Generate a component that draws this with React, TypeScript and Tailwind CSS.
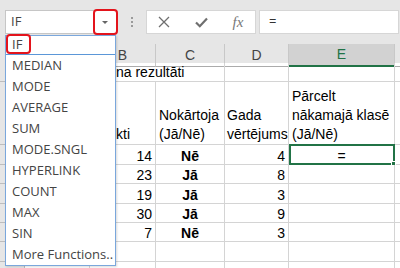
import React from "react";

type Row = { b: string; c: string; d: string; h: string };

const rows: Row[] = [
  { b: "14", c: "Nē", d: "4", h: "h-[20px]" },
  { b: "23", c: "Jā", d: "8", h: "h-[19px]" },
  { b: "19", c: "Jā", d: "3", h: "h-[20px]" },
  { b: "30", c: "Jā", d: "9", h: "h-[19px]" },
  { b: "7", c: "Nē", d: "3", h: "h-[19px]" },
];

const functions = [
  "MEDIAN",
  "MODE",
  "AVERAGE",
  "SUM",
  "MODE.SNGL",
  "HYPERLINK",
  "COUNT",
  "MAX",
  "SIN",
  "More Functions..",
];

const cell = "border-r border-b border-[#d4d4d4]";
const rowHead = "border-r border-b border-[#bdbdbd] bg-[#e6e6e6]";

function Toolbar() {
  return (
    <div className="flex h-[44px] items-start bg-[#e6e6e6] pt-[10px]">
      {/* Name box */}
      <div className="ml-[5px] flex h-[24px] w-[112px] items-center justify-between border border-[#c6c6c6] bg-white pl-[5px] pr-[8px] font-['Open_Sans'] text-[13px] text-[#444]">
        <span>IF</span>
        <span className="mt-[1px] h-0 w-0 border-x-[3px] border-t-[3px] border-x-transparent border-t-[#666]" />
      </div>

      {/* Grip */}
      <div className="flex h-[24px] w-[29px] flex-col items-center justify-center gap-[2px]">
        <span className="h-[2px] w-[2px] bg-[#9a9a9a]" />
        <span className="h-[2px] w-[2px] bg-[#9a9a9a]" />
        <span className="h-[2px] w-[2px] bg-[#9a9a9a]" />
      </div>

      {/* Cancel / enter / fx */}
      <div className="flex h-[24px] w-[110px] items-center border border-[#d6d6d6] bg-white text-[#6f6f6f]">
        <div className="flex w-[34px] justify-center">
          <svg width="12" height="12" viewBox="0 0 12 12" fill="none" stroke="currentColor" strokeWidth="1.3">
            <path d="M1 1 L11 11 M11 1 L1 11" />
          </svg>
        </div>
        <div className="flex w-[40px] justify-center">
          <svg width="13" height="11" viewBox="0 0 13 11" fill="none" stroke="currentColor" strokeWidth="2.2">
            <path d="M1 5.5 L4.8 9.2 L12 1.5" />
          </svg>
        </div>
        <div className="flex flex-1 justify-center font-['Liberation_Serif'] text-[15px] italic leading-none text-[#777]">
          fx
        </div>
      </div>

      {/* Formula input */}
      <div className="ml-[3px] mr-[1px] flex h-[24px] flex-1 items-center border border-[#d6d6d6] bg-white pl-[9px] font-['Open_Sans'] text-[13px] text-[#333]">
        =
      </div>
    </div>
  );
}

function Sheet() {
  return (
    <div className="font-['Liberation_Sans'] text-[14px] text-black">
      {/* Column headers (A sits under the dropdown) */}
      <div className="grid h-[19px] grid-cols-[25px_65px_66px_69px_64px_106px_1fr] bg-[#e6e6e6] text-[#444]">
        <div className="border-r border-b border-[#ababab]" />
        <div className="border-r border-b border-r-[#c8c8c8] border-b-[#ababab]" />
        {["B", "C", "D"].map((l) => (
          <div key={l} className="flex items-center justify-center border-r border-b border-r-[#c8c8c8] border-b-[#ababab]">
            {l}
          </div>
        ))}
        <div className="flex items-center justify-center border-r border-b-2 border-r-[#c8c8c8] border-b-[#217346] bg-[#d2d2d2] text-[#217346]">
          E
        </div>
        <div className="border-b border-[#ababab]" />
      </div>

      {/* Row 1 */}
      <div className="grid h-[19px] grid-cols-[25px_65px_66px_69px_64px_106px_1fr]">
        <div className={rowHead} />
        <div className={`col-span-3 flex items-end whitespace-nowrap pl-[91px] leading-[17px] ${cell}`}>
          na rezultāti
        </div>
        <div className={cell} />
        <div className={cell} />
        <div className="border-b border-[#d4d4d4]" />
      </div>

      {/* Row 2 */}
      <div className="grid h-[63px] grid-cols-[25px_65px_66px_69px_64px_106px_1fr] leading-[19px]">
        <div className={rowHead} />
        <div className={cell} />
        <div className={`flex flex-col justify-end pl-[26px] ${cell}`}>kti</div>
        <div className={`flex flex-col justify-end whitespace-nowrap px-[3px] ${cell}`}>
          <span>Nokārtoja</span>
          <span>(Jā/Nē)</span>
        </div>
        <div className={`flex flex-col justify-end whitespace-nowrap px-[2px] ${cell}`}>
          <span>Gada</span>
          <span>vērtējums</span>
        </div>
        <div className={`flex flex-col justify-end whitespace-nowrap px-[3px] ${cell}`}>
          <span>Pārcelt</span>
          <span>nākamajā klasē</span>
          <span>(Jā/Nē)</span>
        </div>
        <div className="border-b border-[#d4d4d4]" />
      </div>

      {/* Data rows */}
      {rows.map((r, i) => (
        <div key={i} className={`grid grid-cols-[25px_65px_66px_69px_64px_106px_1fr] leading-[16px] ${r.h}`}>
          <div className={rowHead} />
          <div className={cell} />
          <div className={`flex items-end justify-end px-[3px] ${cell}`}>{r.b}</div>
          <div className={`flex items-end justify-center font-bold ${cell}`}>{r.c}</div>
          <div className={`flex items-end justify-end px-[3px] ${cell}`}>{r.d}</div>
          <div className={`relative flex items-end justify-center ${cell}`}>
            {i === 0 && (
              <>
                <span>=</span>
                <div className="absolute -top-[1px] left-0 h-[21px] w-[106px] border-2 border-[#217346]" />
                <div className="absolute -bottom-[2px] -right-[2px] h-[5px] w-[5px] border border-white bg-[#217346]" />
              </>
            )}
          </div>
          <div className="border-b border-[#d4d4d4]" />
        </div>
      ))}

      {[8, 9].map((n) => (
        <div key={n} className="grid h-[20px] grid-cols-[25px_65px_66px_69px_64px_106px_1fr]">
          <div className={rowHead} />
          <div className={cell} />
          <div className={cell} />
          <div className={cell} />
          <div className={cell} />
          <div className={cell} />
          <div className="border-b border-[#d4d4d4]" />
        </div>
      ))}
    </div>
  );
}

function FunctionDropdown() {
  return (
    <div className="absolute left-[5px] top-[35px] flex w-[111px] flex-col border border-[#7aa7dc] bg-white font-['Open_Sans'] text-[13px] text-[#444] shadow-[1px_1px_2px_rgba(0,0,0,0.15)]">
      <div className="flex h-[19px] items-center border-b border-[#5b97d8] pl-[6px]">IF</div>
      <div className="flex flex-col">
        {functions.map((f) => (
          <div key={f} className="flex h-[21px] items-center whitespace-nowrap pl-[6px]">
            {f}
          </div>
        ))}
      </div>
    </div>
  );
}

export default function App() {
  return (
    <div className="relative h-[268px] w-[400px] overflow-hidden bg-white">
      <Toolbar />
      <Sheet />
      <FunctionDropdown />

      {/* Red annotation marks */}
      <div className="absolute left-[93px] top-[9px] h-[26px] w-[25px] rounded-[4px] border-2 border-[#e3141c]" />
      <div className="absolute left-[6px] top-[34px] h-[20px] w-[25px] rounded-[4px] border-2 border-[#e3141c]" />
    </div>
  );
}
